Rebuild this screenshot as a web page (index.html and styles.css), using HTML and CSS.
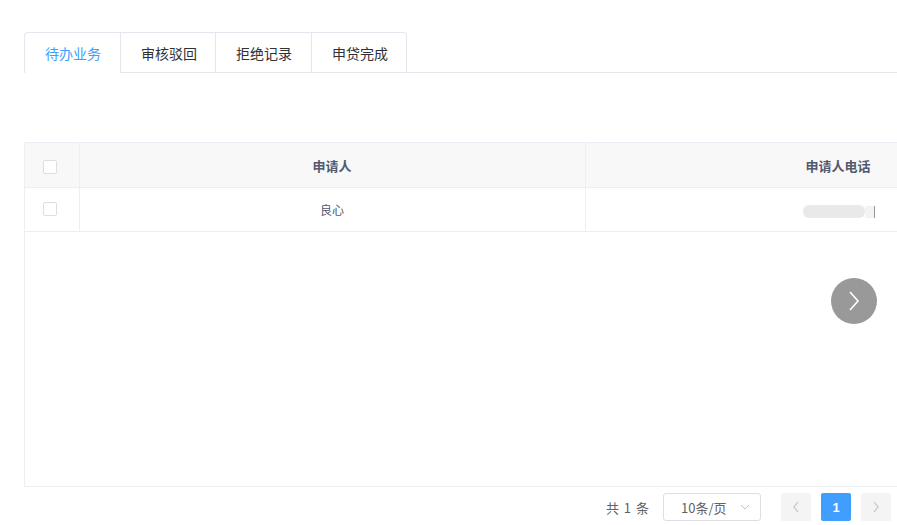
FILE: index.html
```html
<!DOCTYPE html>
<html lang="zh-CN">
<head>
  <meta charset="UTF-8">
  <meta name="viewport" content="width=device-width, initial-scale=1.0">
  <title>贷款业务</title>
  <link rel="stylesheet" href="styles.css">
</head>
<body>
<div class="page">
  <!-- 业务分类标签 -->
  <div class="tabs">
    <div class="tabs-nav">
      <div class="tab active">待办业务</div>
      <div class="tab">审核驳回</div>
      <div class="tab">拒绝记录</div>
      <div class="tab">申贷完成</div>
    </div>
  </div>

  <!-- 列表 -->
  <div class="table-box">
    <table class="grid">
      <colgroup>
        <col class="col-check">
        <col class="col-name">
        <col class="col-phone">
      </colgroup>
      <thead>
        <tr>
          <th class="cell-check"><span class="checkbox"></span></th>
          <th>申请人</th>
          <th>申请人电话</th>
        </tr>
      </thead>
      <tbody>
        <tr>
          <td class="cell-check"><span class="checkbox"></span></td>
          <td>良心</td>
          <td><span class="masked"></span><span class="masked-end"></span></td>
        </tr>
      </tbody>
    </table>
    <button class="scroll-next" type="button">
      <svg width="16" height="22" viewBox="0 0 16 22"><path d="M4 2 L12 11 L4 20" fill="none" stroke="#fff" stroke-width="1.6"/></svg>
    </button>
  </div>

  <!-- 分页 -->
  <div class="pager">
    <span class="total">共 1 条</span>
    <div class="size-select">
      <span>10条/页</span>
      <svg width="10" height="6" viewBox="0 0 10 6"><path d="M1 1 L5 5 L9 1" fill="none" stroke="#c0c4cc" stroke-width="1"/></svg>
    </div>
    <button class="pg-btn prev" type="button">
      <svg width="8" height="12" viewBox="0 0 8 12"><path d="M6 1 L2 6 L6 11" fill="none" stroke="#c0c4cc" stroke-width="1.2"/></svg>
    </button>
    <button class="pg-btn current" type="button">1</button>
    <button class="pg-btn next" type="button">
      <svg width="8" height="12" viewBox="0 0 8 12"><path d="M2 1 L6 6 L2 11" fill="none" stroke="#c0c4cc" stroke-width="1.2"/></svg>
    </button>
  </div>
</div>
</body>
</html>
```

FILE: styles.css
```css
/* General */
html, body {
  margin: 0;
  padding: 0;
  background: #fff;
  overflow: hidden;
}
body {
  font-family: "Noto Sans CJK SC", "Liberation Sans", sans-serif;
  color: #606266;
  font-size: 14px;
}
.page {
  padding: 32px 0 0 24px;
}
/* Tabs */
.tabs {
  border-bottom: 1px solid #e4e7ed;
  height: 40px;
}
.tabs-nav {
  display: inline-flex;
  border: 1px solid #e4e7ed;
  border-bottom: none;
  border-radius: 4px 4px 0 0;
  height: 40px;
}
.tab {
  padding: 0 20px;
  width: 55px;
  line-height: 40px;
  font-size: 14px;
  color: #303133;
  border-left: 1px solid #e4e7ed;
  border-bottom: 1px solid #e4e7ed;
  text-align: center;
  white-space: nowrap;
}
.tab:nth-child(even) {
  width: 54px;
}
.tab:first-child {
  border-left: none;
}
.tab.active {
  color: #409eff;
  border-bottom-color: #fff;
}
/* Table */
.table-box {
  position: relative;
  margin-top: 69px;
  width: 1080px;
  height: 345px;
  box-sizing: border-box;
  border-top: 1px solid #ebeef5;
  border-left: 1px solid #ebeef5;
  border-bottom: 1px solid #ebeef5;
}
.grid {
  table-layout: fixed;
  border-collapse: collapse;
  width: 1066px;
}
.col-check { width: 54px; }
.col-name { width: 506px; }
.col-phone { width: 506px; }
.grid th,
.grid td {
  text-align: center;
  border-right: 1px solid #ebeef5;
  border-bottom: 1px solid #ebeef5;
  padding: 0;
}
.grid th {
  height: 44px;
  background: #f8f8f9;
  color: #515a6e;
  font-size: 13px;
  font-weight: bold;
}
.grid td {
  height: 43px;
  font-size: 12px;
  color: #515a6e;
}
.grid .cell-check {
  padding-right: 4px;
}
.checkbox {
  display: inline-block;
  width: 12px;
  height: 12px;
  border: 1px solid #dcdee2;
  border-radius: 2px;
  background: #fff;
  vertical-align: middle;
}
.grid td .checkbox {
  position: relative;
  top: -2px;
}
.masked {
  display: inline-block;
  width: 62px;
  height: 13px;
  border-radius: 6px;
  background: #e9e9e9;
  vertical-align: middle;
  margin-left: 2px;
}
.masked-end {
  display: inline-block;
  width: 9px;
  height: 12px;
  background: #f3f3f3;
  border-right: 1px solid #999;
  vertical-align: middle;
}
.scroll-next {
  position: absolute;
  left: 806px;
  top: 135px;
  width: 46px;
  height: 46px;
  border: none;
  border-radius: 50%;
  background: #999;
  padding: 0;
  display: flex;
  align-items: center;
  justify-content: center;
}
/* Pagination */
.pager {
  display: flex;
  align-items: center;
  justify-content: flex-end;
  width: 873px;
  box-sizing: border-box;
  padding-right: 6px;
  margin-top: 6px;
  font-size: 13px;
  color: #606266;
}
.total {
  margin-right: 14px;
  word-spacing: 2px;
}
.size-select {
  width: 98px;
  height: 28px;
  box-sizing: border-box;
  border: 1px solid #dcdfe6;
  border-radius: 3px;
  display: flex;
  align-items: center;
  justify-content: space-between;
  padding: 0 10px 0 17px;
  margin-right: 20px;
}
.pg-btn {
  width: 30px;
  height: 28px;
  border: none;
  border-radius: 2px;
  background: #f4f4f5;
  margin-left: 10px;
  padding: 0;
  display: flex;
  align-items: center;
  justify-content: center;
  font-family: "Liberation Sans", sans-serif;
  font-size: 13px;
  font-weight: bold;
}
.pg-btn.prev {
  margin-left: 0;
}
.pg-btn.current {
  background: #409eff;
  color: #fff;
}
```
